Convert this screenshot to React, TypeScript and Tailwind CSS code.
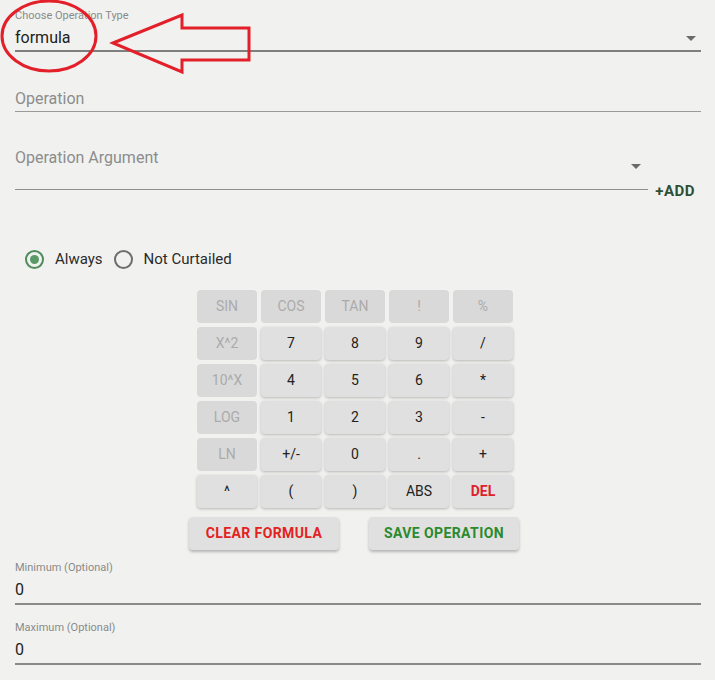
import React from "react";

type Key = { label: string; disabled?: boolean; danger?: boolean };

const keys: Key[] = [
  { label: "SIN", disabled: true },
  { label: "COS", disabled: true },
  { label: "TAN", disabled: true },
  { label: "!", disabled: true },
  { label: "%", disabled: true },
  { label: "X^2", disabled: true },
  { label: "7" },
  { label: "8" },
  { label: "9" },
  { label: "/" },
  { label: "10^X", disabled: true },
  { label: "4" },
  { label: "5" },
  { label: "6" },
  { label: "*" },
  { label: "LOG", disabled: true },
  { label: "1" },
  { label: "2" },
  { label: "3" },
  { label: "-" },
  { label: "LN", disabled: true },
  { label: "+/-" },
  { label: "0" },
  { label: "." },
  { label: "+" },
  { label: "^" },
  { label: "(" },
  { label: ")" },
  { label: "ABS" },
  { label: "DEL", danger: true },
];

function Caret() {
  return (
    <svg width="10" height="5" viewBox="0 0 10 5" className="block shrink-0">
      <polygon points="0,0 10,0 5,5" fill="#6b6b6b" />
    </svg>
  );
}

function Radio({ checked }: { checked?: boolean }) {
  return (
    <span
      className={`flex h-[19px] w-[19px] shrink-0 items-center justify-center rounded-full border-2 ${
        checked ? "border-[#4f8c5c]" : "border-[#6e6e6e]"
      }`}
    >
      {checked && <span className="h-[9px] w-[9px] rounded-full bg-[#5a9a68]" />}
    </span>
  );
}

export default function App() {
  return (
    <div className="relative min-h-screen w-full bg-[#f1f2f0] px-[15px] pr-[14px] font-['Roboto','Liberation_Sans',sans-serif]">
      {/* Choose Operation Type */}
      <div className="pt-[9px]">
        <div className="text-[11px] leading-[13px] text-[#8a8a8a]">Choose Operation Type</div>
        <div className="mt-[6px] flex items-center justify-between border-b-2 border-[#7f7f7f] pb-[2px]">
          <div className="text-[16px] leading-[20px] text-[#222]">formula</div>
          <div className="mr-[5px]">
            <Caret />
          </div>
        </div>
      </div>

      {/* Operation */}
      <div className="mt-[37px] border-b border-[#9a9a9a] pb-[2px] text-[16px] leading-[20px] text-[#8c8c8c]">
        Operation
      </div>

      {/* Operation Argument */}
      <div className="mt-[36px] flex h-[42px] items-start">
        <div className="relative h-[42px] flex-1 border-b border-[#8f8f8f]">
          <div className="text-[16px] leading-[20px] text-[#8c8c8c]">Operation Argument</div>
          <div className="absolute right-[7px] top-[16px]">
            <Caret />
          </div>
        </div>
        <button className="pl-[7px] pr-[6px] pt-[35px] text-[15px] font-bold leading-[16px] tracking-[0.5px] text-[#2f4f35]">
          +ADD
        </button>
      </div>

      {/* Radios */}
      <div className="mt-[59px] flex h-[20px] items-center pl-[10px] text-[15px] leading-[20px] text-[#2a2a2a]">
        <Radio checked />
        <div className="ml-[11px]">Always</div>
        <div className="ml-[11px]">
          <Radio />
        </div>
        <div className="ml-[11px]">Not Curtailed</div>
      </div>

      {/* Keypad */}
      <div className="ml-[182px] mt-[21px] grid grid-cols-[repeat(5,60px)] gap-[4px]">
        {keys.map((k) => (
          <button
            key={k.label}
            className={`flex h-[33px] items-center justify-center rounded-[4px] text-[14px] ${
              k.disabled
                ? "bg-[#d9d9d9] text-[#ababab]"
                : "bg-[#e0e0e0] shadow-[0_1px_3px_rgba(0,0,0,0.25)] " +
                  (k.danger ? "font-bold text-[#e0202a]" : "text-[#222]")
            }`}
          >
            {k.label}
          </button>
        ))}
      </div>

      {/* Actions */}
      <div className="ml-[174px] mt-[9px] flex gap-[30px]">
        <button className="h-[33px] w-[150px] rounded-[4px] bg-[#e0e0e0] text-[14px] font-bold tracking-[0.4px] text-[#e32222] shadow-[0_2px_3px_rgba(0,0,0,0.25)]">
          CLEAR FORMULA
        </button>
        <button className="h-[33px] w-[150px] rounded-[4px] bg-[#e0e0e0] text-[14px] font-bold tracking-[0.4px] text-[#2a8a2e] shadow-[0_2px_3px_rgba(0,0,0,0.25)]">
          SAVE OPERATION
        </button>
      </div>

      {/* Minimum */}
      <div className="mt-[11px]">
        <div className="text-[11px] leading-[13px] text-[#8a8a8a]">Minimum (Optional)</div>
        <div className="mt-[6px] border-b-2 border-[#8a8a8a] pb-[3px] text-[16px] leading-[20px] text-[#222]">
          0
        </div>
      </div>

      {/* Maximum */}
      <div className="mt-[16px]">
        <div className="text-[11px] leading-[13px] text-[#8a8a8a]">Maximum (Optional)</div>
        <div className="mt-[6px] border-b-2 border-[#8a8a8a] pb-[3px] text-[16px] leading-[20px] text-[#222]">
          0
        </div>
      </div>

      {/* red annotation */}
      <svg
        className="pointer-events-none absolute left-0 top-0"
        width="260"
        height="80"
        viewBox="0 0 260 80"
      >
        <ellipse cx="49" cy="36" rx="47" ry="35" fill="none" stroke="#e3202a" strokeWidth="3" />
        <polygon
          points="113,43 182,15 182,28 249,28 249,60 182,60 182,72"
          fill="none"
          stroke="#e3202a"
          strokeWidth="3"
          strokeLinejoin="miter"
        />
      </svg>
    </div>
  );
}
